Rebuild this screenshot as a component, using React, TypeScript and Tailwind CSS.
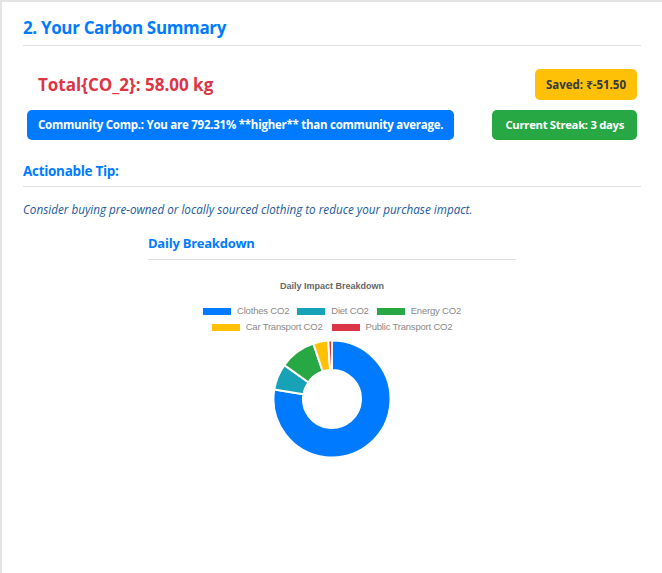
import React from "react";

const slices = [
  { label: "Clothes CO2", value: 45, color: "#007bff" },
  { label: "Diet CO2", value: 4.2, color: "#17a2b8" },
  { label: "Energy CO2", value: 5.8, color: "#28a745" },
  { label: "Car Transport CO2", value: 2.4, color: "#ffc107" },
  { label: "Public Transport CO2", value: 0.6, color: "#dc3545" },
];

function arcPath(cx: number, cy: number, r0: number, r1: number, a0: number, a1: number) {
  const p = (r: number, a: number) => [cx + r * Math.sin(a), cy - r * Math.cos(a)];
  const large = a1 - a0 > Math.PI ? 1 : 0;
  const [x0, y0] = p(r1, a0);
  const [x1, y1] = p(r1, a1);
  const [x2, y2] = p(r0, a1);
  const [x3, y3] = p(r0, a0);
  return `M${x0} ${y0} A${r1} ${r1} 0 ${large} 1 ${x1} ${y1} L${x2} ${y2} A${r0} ${r0} 0 ${large} 0 ${x3} ${y3} Z`;
}

function Donut() {
  const total = slices.reduce((s, d) => s + d.value, 0);
  let a = 0;
  return (
    <svg width="122" height="122" viewBox="0 0 122 122">
      {slices.map((d) => {
        const a0 = a;
        const a1 = a + (d.value / total) * Math.PI * 2;
        a = a1;
        return (
          <path
            key={d.label}
            d={arcPath(61, 61, 29, 58.5, a0, a1)}
            fill={d.color}
            stroke="#ffffff"
            strokeWidth="2"
            strokeLinejoin="round"
          />
        );
      })}
    </svg>
  );
}

function LegendItem({ label, color }: { label: string; color: string }) {
  return (
    <div className="flex items-center gap-[6px]">
      <span className="block w-[28px] h-[7px]" style={{ background: color }} />
      <span>{label}</span>
    </div>
  );
}

export default function App() {
  return (
    <div
      className="min-h-[573px] w-[662px] bg-white border-t-2 border-l-2 border-[#e4e4e4] pl-[21px] pr-[21px] overflow-hidden"
      style={{ fontFamily: '"Open Sans", "Noto Sans", sans-serif' }}
    >
      <h2 className="text-[17px] font-bold text-[#007bff] pt-[14px] pb-[5px] border-b border-[#dedede] leading-[24px] tracking-[-0.35px]">
        2. Your Carbon Summary
      </h2>

      <div className="flex items-center justify-between mt-[23px]">
        <div className="pl-[15px] text-[17px] font-bold text-[#dc3545] leading-[24px]">
          Total{"{"}CO_2{"}"}: 58.00 kg
        </div>
        <div className="mr-[4px] h-[31px] flex items-center px-[11px] rounded-[5px] bg-[#ffc107] text-[#343a40] text-[11.5px] font-bold">
          Saved: ₹-51.50
        </div>
      </div>

      <div className="flex items-center justify-between mt-[10px]">
        <div className="ml-[4px] h-[30px] flex items-center px-[11px] rounded-[5px] bg-[#007bff] text-white text-[11.5px] font-bold tracking-[-0.25px]">
          Community Comp.: You are 792.31% **higher** than community average.
        </div>
        <div className="mr-[4px] h-[30px] flex items-center px-[13px] rounded-[5px] bg-[#28a745] text-white text-[11.3px] font-bold tracking-[-0.3px]">
          Current Streak: 3 days
        </div>
      </div>

      <h3 className="mt-[20px] text-[13.5px] font-bold text-[#007bff] leading-[22px] pb-[4px] border-b border-[#dedede] tracking-[-0.3px]">
        Actionable Tip:
      </h3>
      <p className="mt-[13px] text-[11.7px] italic text-[#1d5a9c] leading-[18px]">
        Consider buying pre-owned or locally sourced clothing to reduce your purchase impact.
      </p>

      <div className="mx-auto w-[368px] mt-[14px]">
        <h4 className="text-[13px] font-bold text-[#007bff] leading-[22px] pb-[5px] border-b border-[#dedede] tracking-[-0.25px]">
          Daily Breakdown
        </h4>
        <div
          className="flex flex-col items-center text-[#666666]"
          style={{ fontFamily: '"Liberation Sans", Arial, sans-serif' }}
        >
          <div className="mt-[20px] text-[9px] font-bold leading-[12px]">Daily Impact Breakdown</div>
          <div className="mt-[13px] flex flex-col items-center gap-[4px] text-[9.5px] text-[#8a8a8a] leading-[12px] tracking-[-0.2px]">
            <div className="flex gap-[8px]">
              <LegendItem label={slices[0].label} color={slices[0].color} />
              <LegendItem label={slices[1].label} color={slices[1].color} />
              <LegendItem label={slices[2].label} color={slices[2].color} />
            </div>
            <div className="flex gap-[9px]">
              <LegendItem label={slices[3].label} color={slices[3].color} />
              <LegendItem label={slices[4].label} color={slices[4].color} />
            </div>
          </div>
          <div className="mt-[5px]">
            <Donut />
          </div>
        </div>
      </div>
    </div>
  );
}
